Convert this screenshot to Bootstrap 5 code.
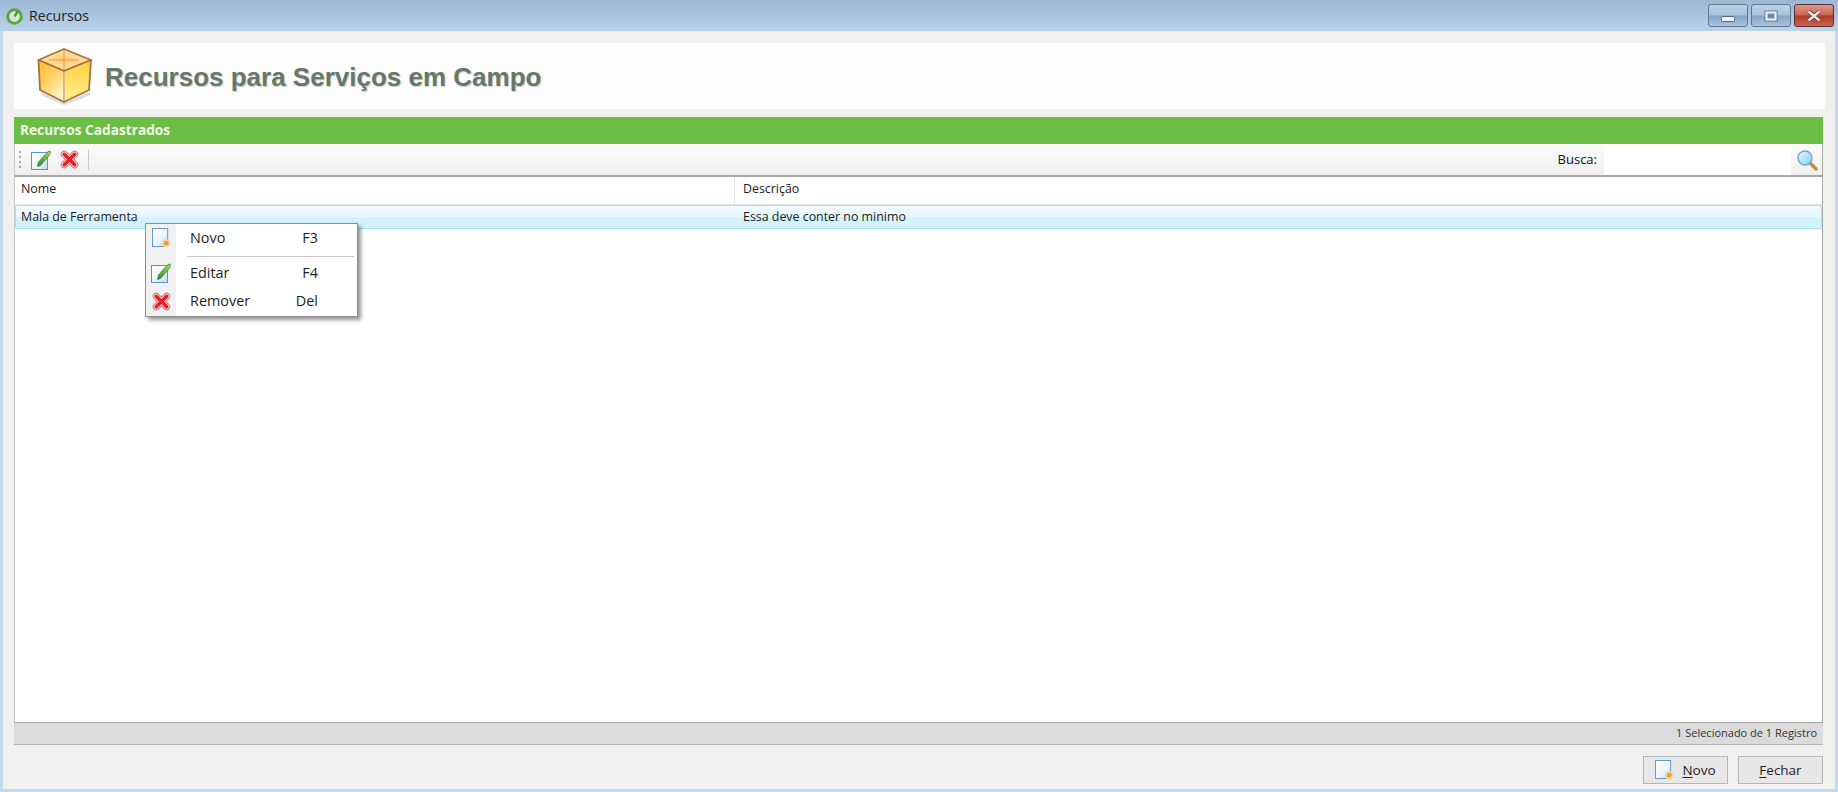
<!DOCTYPE html>
<html lang="pt-BR">
<head>
    <meta charset="UTF-8">
    <meta name="viewport" content="width=device-width, initial-scale=1.0">
    <title>Recursos</title>
    <link href="https://cdn.jsdelivr.net/npm/bootstrap@5.3.0/dist/css/bootstrap.min.css" rel="stylesheet">
    <style>
        html, body { height: 100%; }
        body { font-family: "Open Sans", "Liberation Sans", sans-serif; font-size: 12.4px; color: #1c1c1c; background: #c4d9ee; overflow: hidden; }
        .win-frame { width: 1838px; height: 792px; }
        .win-title { height: 31px; padding: 1px 4px 0 5px; background: linear-gradient(#9cb7d5, #b9d3ec); }
        .win-name { font-size: 14.2px; color: #222; margin-left: 5px; }
        .win-btns { gap: 3px; align-self: flex-start; margin-top: 3px; }
        .win-btn { width: 40px; height: 23px; border: 1px solid #62768f; border-radius: 3px; background: linear-gradient(#bfd1e6 0, #a9c1dc 48%, #86a3c4 52%, #a9c4e0 100%); }
        .win-btn.is-close { border-color: #5e2a35; background: linear-gradient(#d99a8d 0, #c7644f 48%, #ad3a28 52%, #c9634f 100%); }
        .win-body { margin: 0 3px 3px; padding: 12px 9px 5px 11px; background: #f0f0f0; min-height: 0; }
        .head-panel { height: 66px; background: #fdfdfd; padding-left: 23px; margin-right: 1px; }
        .head-title { font-family: "Liberation Sans", sans-serif; font-weight: 700; font-size: 26px; color: #66776b; margin: 0 0 0 12px; padding-top: 3px; text-shadow: 1px 1px 1px #c9cfc9; }
        .green-bar { margin-top: 8px; height: 27px; background: #6cbd45; color: #f0f9e6; font-weight: 700; font-size: 13.7px; padding-left: 6px; margin-right: 3px; }
        .grid-box { margin-right: 3px; border-right: 1px solid #a9a9a9; border-left: 1px solid #c8c8c8; }
        .tool-row { height: 33px; background: linear-gradient(#fdfdfd, #eeeeee); border-bottom: 2px solid #a8a8a8; padding-left: 4px; }
        .tool-grip { width: 2px; height: 18px; margin-right: 10px; background: repeating-linear-gradient(#a8a8a8 0 2px, transparent 2px 5px); }
        .tool-sep { width: 1px; height: 20px; background: #c9c9c9; margin-left: 9px; }
        .tool-gap { margin-left: 9px; }
        .search-label { margin-right: 7px; color: #111; font-size: 13px; }
        .search-field { width: 187px; height: 100%; background: #fff; border: 0; }
        .search-btn { width: 31px; height: 100%; }
        .col-nome { width: 720px; padding-left: 6px; }
        .col-desc { padding-left: 8px; }
        .grid-head { height: 28px; background: #fff; border-bottom: 1px solid #e5e5e5; }
        .grid-head .col-nome { height: 100%; border-right: 1px solid #e4e4e4; line-height: 24px; }
        .grid-head .col-desc { line-height: 24px; }
        .grid-row { height: 24px; border: 1px solid #a6e4f4; border-radius: 2px; background: linear-gradient(#eefaff 0, #e8f8fd 48%, #d1f3fd 52%, #cff2fc 100%); line-height: 21px; }
        .grid-row .col-nome { width: 719px; padding-left: 5px; }
        .grid-empty { background: #fff; }
        .status-row { height: 23px; background: #dbdbdb; border-top: 1px solid #a8a8a8; border-bottom: 1px solid #b4b4b4; padding-right: 6px; margin-right: 3px; color: #333; font-size: 11px; }
        .foot-row { height: 39px; padding-top: 11px; gap: 10px; padding-right: 3px; }
        .foot-btn { width: 85px; height: 28px; border: 1px solid #b5b5b5; background: #e7e7e7; border-radius: 0; padding: 0; font-size: 13.5px; color: #222; }
        .foot-btn u { text-underline-offset: 2px; }
        .ctx-menu { display: block; position: absolute; left: 145px; top: 223px; width: 213px; height: 94px; padding: 0; margin: 0; background: #fff; border: 1px solid #8e8e8e; border-radius: 0; box-shadow: 3px 3px 4px rgba(0,0,0,.42); font-size: 14.4px; color: #1e1e1e; z-index: 5; }
        .ctx-strip { position: absolute; left: 0; top: 0; bottom: 0; width: 30px; background: #f1f1f1; }
        .ctx-item { position: relative; height: 26px; margin-top: 1px; }
        .ctx-item + .ctx-item { margin-top: 2px; }
        .ctx-icon { width: 30px; }
        .ctx-text { margin-left: 14px; width: 92px; }
        .ctx-key { width: 36px; text-align: right; }
        .ctx-line { position: relative; height: 1px; background: #c9c9c9; margin: 5px 3px 3px 41px; }
    </style>
</head>
<body>
    <svg width="0" height="0" class="position-absolute">
        <defs>
            <linearGradient id="pageFill" x1="0" y1="0" x2="1" y2="1">
                <stop offset="0" stop-color="#ffffff"/><stop offset=".6" stop-color="#eaf2fb"/><stop offset="1" stop-color="#b9d4ef"/>
            </linearGradient>
            <linearGradient id="leafFill" x1="1" y1="0" x2="0" y2="1">
                <stop offset="0" stop-color="#a6e35c"/><stop offset="1" stop-color="#2a8a2a"/>
            </linearGradient>
            <linearGradient id="boxLeft" x1="0" y1="0" x2=".7" y2="1">
                <stop offset="0" stop-color="#ffb92a"/><stop offset=".55" stop-color="#ffd468"/><stop offset="1" stop-color="#fff4cc"/>
            </linearGradient>
            <linearGradient id="boxRight" x1="0" y1="0" x2="0" y2="1">
                <stop offset="0" stop-color="#ffcf3f"/><stop offset="1" stop-color="#fff08f"/>
            </linearGradient>
            <radialGradient id="boxTop" cx=".5" cy=".5" r=".6">
                <stop offset="0" stop-color="#ffc878"/><stop offset="1" stop-color="#ffedb0"/>
            </radialGradient>
            <linearGradient id="lensFill" x1="0" y1="0" x2="1" y2="1">
                <stop offset="0" stop-color="#eafaff"/><stop offset="1" stop-color="#7fcdf0"/>
            </linearGradient>
            <symbol id="icoEdit" viewBox="0 0 20 20">
                <rect x=".5" y="2.5" width="16" height="17" fill="url(#pageFill)" stroke="#5b93c7"/>
                <path d="M6.5 16.5 L7.5 12 L16 2.5 C18 .8 19.8 .5 19.5 2 C19.3 4 18 5.5 17 7 L9.5 15.5Z" fill="url(#leafFill)" stroke="#2d7d2a" stroke-width=".7"/>
            </symbol>
            <symbol id="icoDel" viewBox="0 0 20 20">
                <path d="M4.5 4.5 L15.5 15.5 M15.5 4.5 L4.5 15.5" stroke="#c9747b" stroke-width="7.5" stroke-linecap="round"/>
                <path d="M4.5 4.5 L15.5 15.5 M15.5 4.5 L4.5 15.5" stroke="#f4d5d6" stroke-width="5.6" stroke-linecap="round"/>
                <path d="M4.5 4.5 L15.5 15.5 M15.5 4.5 L4.5 15.5" stroke="#df2229" stroke-width="3.6" stroke-linecap="round"/>
            </symbol>
            <symbol id="icoNew" viewBox="0 0 20 21">
                <rect x=".5" y=".5" width="16" height="19" fill="url(#pageFill)" stroke="#5b93c7"/>
                <circle cx="15" cy="16" r="4.2" fill="#eed9a8"/>
                <circle cx="15" cy="16" r="2.6" fill="#f2a02a"/>
            </symbol>
        </defs>
    </svg>

    <div class="win-frame d-flex flex-column">
        <div class="win-title d-flex align-items-center flex-shrink-0">
            <svg width="19" height="19" viewBox="0 0 19 19">
                <circle cx="9.5" cy="9.5" r="6.8" fill="#d8e6d4" stroke="#57a83f" stroke-width="3"/>
                <path d="M9.5 9.5 L12.5 4.5" stroke="#3f8d30" stroke-width="2.2"/>
            </svg>
            <span class="win-name">Recursos</span>
            <div class="win-btns d-flex ms-auto">
                <div class="win-btn d-flex align-items-center justify-content-center">
                    <svg width="14" height="14" viewBox="0 0 14 14"><rect x=".5" y="7.5" width="13" height="5" rx="1" fill="#eef3f9" stroke="#4f6784"/></svg>
                </div>
                <div class="win-btn d-flex align-items-center justify-content-center">
                    <svg width="14" height="12" viewBox="0 0 14 12"><rect x="1" y="1" width="12" height="10" fill="#6f87a5" stroke="#4f6784" stroke-width=".8"/><rect x="2.5" y="2.5" width="9" height="7" fill="none" stroke="#e9eff7" stroke-width="2.2"/></svg>
                </div>
                <div class="win-btn is-close d-flex align-items-center justify-content-center">
                    <svg width="16" height="12" viewBox="0 0 16 12"><path d="M2.5 1.5 L13.5 10.5 M13.5 1.5 L2.5 10.5" stroke="#6b2b24" stroke-width="4"/><path d="M2.5 1.5 L13.5 10.5 M13.5 1.5 L2.5 10.5" stroke="#e6e2df" stroke-width="2.6"/></svg>
                </div>
            </div>
        </div>

        <div class="win-body d-flex flex-column flex-grow-1">
            <div class="head-panel d-flex align-items-center flex-shrink-0">
                <svg width="56" height="58" viewBox="0 0 56 58">
                    <path d="M4 45 L27 56 L52 45 L54 48 L27 58 L6 49Z" fill="#bbb" opacity=".5"/>
                    <path d="M1.5 13 L27 2 L54 13 L27 24Z" fill="url(#boxTop)" stroke="#a5763c" stroke-width="1.8" stroke-linejoin="round"/>
                    <path d="M1.5 13 L27 24 L27 55 L3 43Z" fill="url(#boxLeft)" stroke="#a5763c" stroke-width="1.8" stroke-linejoin="round"/>
                    <path d="M54 13 L27 24 L27 55 L52 43Z" fill="url(#boxRight)" stroke="#a5763c" stroke-width="1.8" stroke-linejoin="round"/>
                    <path d="M27 3 V23 M12 13 H42" stroke="#e59a45" stroke-width="1"/>
                    <path d="M27 25 V54" stroke="#fff6d8" stroke-width="1"/>
                </svg>
                <h1 class="head-title">Recursos para Serviços em Campo</h1>
            </div>

            <div class="green-bar d-flex align-items-center flex-shrink-0">Recursos Cadastrados</div>

            <div class="grid-box d-flex flex-column flex-grow-1">
                <div class="tool-row d-flex align-items-center flex-shrink-0">
                    <span class="tool-grip"></span>
                    <svg width="20" height="20"><use href="#icoEdit"/></svg>
                    <svg class="tool-gap" width="19" height="19"><use href="#icoDel"/></svg>
                    <span class="tool-sep"></span>
                    <span class="ms-auto search-label">Busca:</span>
                    <input class="search-field" type="text" aria-label="Busca">
                    <span class="search-btn d-flex align-items-center justify-content-center">
                        <svg width="22" height="22" viewBox="0 0 22 22">
                            <path d="M13.5 13.5 L20 20" stroke="#c98a3c" stroke-width="3.2" stroke-linecap="round"/>
                            <circle cx="9" cy="9" r="7" fill="url(#lensFill)" stroke="#6aa9cf" stroke-width="1.4"/>
                        </svg>
                    </span>
                </div>
                <div class="grid-head d-flex flex-shrink-0">
                    <div class="col-nome">Nome</div>
                    <div class="col-desc">Descrição</div>
                </div>
                <div class="grid-row d-flex flex-shrink-0">
                    <div class="col-nome">Mala de Ferramenta</div>
                    <div class="col-desc">Essa deve conter no minimo</div>
                </div>
                <div class="grid-empty flex-grow-1"></div>
            </div>

            <div class="status-row d-flex align-items-center justify-content-end flex-shrink-0">1 Selecionado de 1 Registro</div>

            <div class="foot-row d-flex justify-content-end flex-shrink-0">
                <button class="btn foot-btn d-flex align-items-center justify-content-center gap-2" type="button">
                    <svg width="19" height="20"><use href="#icoNew"/></svg>
                    <span><u>N</u>ovo</span>
                </button>
                <button class="btn foot-btn" type="button"><u>F</u>echar</button>
            </div>
        </div>
    </div>

    <div class="ctx-menu">
        <div class="ctx-strip"></div>
        <div class="ctx-item d-flex align-items-center">
            <span class="ctx-icon d-flex justify-content-center"><svg width="19" height="20"><use href="#icoNew"/></svg></span>
            <span class="ctx-text">Novo</span><span class="ctx-key">F3</span>
        </div>
        <div class="ctx-line"></div>
        <div class="ctx-item d-flex align-items-center">
            <span class="ctx-icon d-flex justify-content-center"><svg width="20" height="20"><use href="#icoEdit"/></svg></span>
            <span class="ctx-text">Editar</span><span class="ctx-key">F4</span>
        </div>
        <div class="ctx-item d-flex align-items-center">
            <span class="ctx-icon d-flex justify-content-center"><svg width="19" height="19"><use href="#icoDel"/></svg></span>
            <span class="ctx-text">Remover</span><span class="ctx-key">Del</span>
        </div>
    </div>

    <script src="https://cdn.jsdelivr.net/npm/bootstrap@5.3.0/dist/js/bootstrap.bundle.min.js"></script>
</body>
</html>
